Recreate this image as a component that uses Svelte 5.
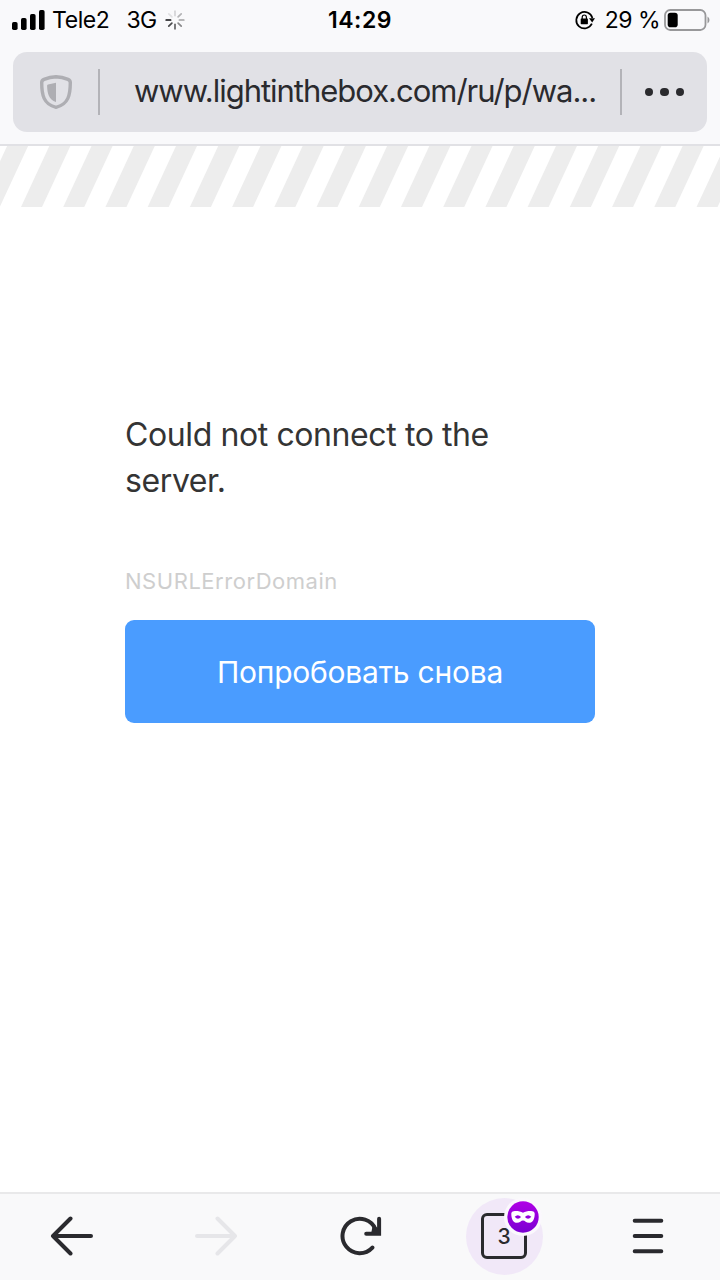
<script lang="ts">
  const url: string = 'www.lightinthebox.com/ru/p/wa...';
  const tabCount: number = 3;

  const signalBars = [
    { x: 0, height: 8 },
    { x: 9, height: 12 },
    { x: 18, height: 16 },
    { x: 27, height: 20 },
  ];

  // spinner spokes, clockwise from the top
  const spokes = ['#d4d4d6', '#b4b4b6', '#a0a0a2', '#88888a', '#626264', '#4a4a4c', '#0a0a0c', '#e0e0e2'];

  const stripes: number[] = Array.from({ length: 18 }, (_, i) => i * 42.22 - 21.2);
</script>

<div class="screen">
  <header>
    <div class="status">
      <div class="status-left">
        <svg class="signal" width="33" height="20" viewBox="0 0 33 20">
          {#each signalBars as bar}
            <rect x={bar.x} y={20 - bar.height} width="5.6" height={bar.height} rx="1.7" />
          {/each}
        </svg>
        <span class="carrier">Tele2</span>
        <span class="network">3G</span>
        <svg class="spinner" width="20" height="20" viewBox="-10 -10 20 20">
          {#each spokes as shade, i}
            <line y1="-4.4" y2="-8.8" stroke={shade} transform="rotate({i * 45})" />
          {/each}
        </svg>
      </div>
      <span class="time">14:29</span>
      <div class="status-right">
        <svg class="lock" width="20" height="20" viewBox="0 0 20 20">
          <path d="M16.9 13.7A8.2 8.2 0 1 1 17.4 8" fill="none" stroke="#000" stroke-width="1.7" />
          <path d="M14 8.2h6l-2.8 4.4z" />
          <rect x="5.7" y="8.5" width="7.2" height="5.7" rx=".6" />
          <path d="M7.2 9V7.3a2.1 2.3 0 0 1 4.2 0V9" fill="none" stroke="#000" stroke-width="1.2" />
        </svg>
        <span class="percent">29 %</span>
        <svg class="battery" width="46" height="22" viewBox="0 0 46 22">
          <rect x="1" y="1" width="40.5" height="20" rx="5.2" fill="none" stroke="#98989a" stroke-width="1.8" />
          <rect x="3.7" y="3.8" width="10" height="14.4" rx="2.8" />
          <path d="M43.5 7.5q2 1.2 2 3.5t-2 3.5z" fill="#98989a" />
        </svg>
      </div>
    </div>

    <div class="url-bar">
      <button class="shield" aria-label="Tracking protection">
        <svg width="32" height="34" viewBox="0 0 32 34">
          <path d="M16 1.7C11.5 1.9 7.4 3 4 4.4q-2.4 1-2.3 3.4C1.7 19.6 3.5 29.4 16 32.3 28.5 29.4 30.3 19.6 30.3 7.8q.1-2.4-2.3-3.4C24.6 3 20.5 1.9 16 1.7z" fill="none" stroke="#aeaeb3" stroke-width="3.4" />
          <path d="M16 7.8L8 9.5q-1 .2-.9 1.2C7.3 18 8.6 24.6 16 27z" fill="#aeaeb3" />
        </svg>
      </button>
      <span class="url">{url}</span>
      <button class="more" aria-label="Page actions">
        <i></i><i></i><i></i>
      </button>
    </div>
  </header>

  <main>
    <svg class="stripes" width="720" height="61" viewBox="0 0 720 61">
      {#each stripes as x}
        <path d="M{x + 28.3} 0h21L{x + 21} 61h-21z" fill="#ededed" />
      {/each}
    </svg>
    <div class="error">
      <h1>Could not connect to the server.</h1>
      <p>NSURLErrorDomain</p>
      <button class="retry"><span>Попробовать снова</span></button>
    </div>
  </main>

  <nav>
    <button aria-label="Back">
      <svg width="44" height="40" viewBox="0 0 44 40">
        <path d="M41 20H3M20.5 2.5L3 20l17.5 17.5" />
      </svg>
    </button>
    <button class="disabled" aria-label="Forward">
      <svg width="44" height="40" viewBox="0 0 44 40">
        <path d="M3 20h38M23.5 2.5L41 20 23.5 37.5" />
      </svg>
    </button>
    <button aria-label="Reload">
      <svg width="44" height="40" viewBox="0 0 44 40">
        <path d="M34.4 31.6A17.2 17.2 0 1 1 37.6 13.4" />
        <path d="M41.1 2.8V17.8H28.2" stroke-linejoin="miter" />
        <path d="M34.5 10.5L41 12v6h-8z" class="tip" />
      </svg>
    </button>
    <button aria-label="Tabs">
      <span class="tabs">
        <span class="count">{tabCount}</span>
        <svg class="badge" width="38" height="38" viewBox="0 0 38 38">
          <defs>
            <linearGradient id="mask" x1="0" y1="0" x2="0" y2="1">
              <stop offset="0" stop-color="#b000e6" />
              <stop offset="1" stop-color="#7a00d2" />
            </linearGradient>
          </defs>
          <circle cx="19" cy="19" r="19" fill="#fbf8fd" />
          <circle cx="19" cy="19" r="15.7" fill="url(#mask)" />
          <path
            d="M19 14.8c2.5-1.4 6-2 9.2-1.6 1.9.2 2.6 1.2 2.5 3-.2 5.3-2 8.6-5.7 8.6-2.9 0-4-2.4-6-2.4s-3.1 2.4-6 2.4c-3.7 0-5.5-3.3-5.7-8.6-.1-1.8.6-2.8 2.5-3 3.2-.4 6.7.2 9.2 1.6z"
            fill="#fff"
          />
          <path d="M10.7 18.8q3.2-3.4 6.4.2-3.2 3.4-6.4-.2zM27.3 18.8q-3.2-3.4-6.4.2 3.2 3.4 6.4-.2z" fill="#9200dc" />
        </svg>
      </span>
    </button>
    <button aria-label="Menu">
      <svg width="32" height="36" viewBox="0 0 32 36">
        <path d="M2.7 2.7h26.6M2.7 18h26.6M2.7 33.3h26.6" />
      </svg>
    </button>
  </nav>
</div>

<style>
  :global(body) {
    margin: 0;
  }

  .screen {
    display: flex;
    flex-direction: column;
    width: 720px;
    height: 1280px;
    background: #fff;
    font-family: Inter, 'Liberation Sans', sans-serif;
    overflow: hidden;
  }

  button {
    display: flex;
    align-items: center;
    justify-content: center;
    padding: 0;
    border: none;
    background: none;
    font-family: inherit;
  }

  header {
    box-sizing: border-box;
    height: 146px;
    background: #f9f9fb;
    border-bottom: 2px solid #e1e1e5;
  }

  .status {
    display: grid;
    grid-template-columns: 1fr auto 1fr;
    height: 52px;
    padding: 0 10px 0 12px;
    font-size: 23px;
    line-height: 40px;
    color: #000;
    white-space: nowrap;
  }

  .status-left,
  .status-right {
    display: flex;
    align-items: center;
    height: 39px;
  }

  .status-right {
    justify-content: flex-end;
  }

  .carrier {
    margin-left: 7px;
    letter-spacing: -0.4px;
  }

  .network {
    margin-left: 17px;
    letter-spacing: -0.6px;
  }

  .spinner {
    margin-left: 8px;
    stroke-width: 1.7;
    stroke-linecap: round;
  }

  .time {
    margin-right: 2px;
    font-weight: 600;
    letter-spacing: 0.5px;
  }

  .percent {
    margin-left: 10px;
    letter-spacing: -0.5px;
  }

  .battery {
    margin-left: 4px;
  }

  .url-bar {
    display: flex;
    align-items: center;
    height: 80px;
    margin: 0 13px;
    background: #e1e1e6;
    border-radius: 14px;
  }

  .shield,
  .more {
    flex: none;
    box-sizing: border-box;
    width: 87px;
    height: 46px;
  }

  .shield {
    border-right: 2px solid #b3b3b8;
  }

  .url {
    flex: 1;
    padding: 0 0 3px 34px;
    font-size: 31px;
    letter-spacing: -1.02px;
    line-height: 44px;
    color: #2a2a2e;
    white-space: nowrap;
  }

  .more {
    gap: 7px;
    border-left: 2px solid #b3b3b8;
  }

  .more i {
    width: 8.4px;
    height: 8.4px;
    border-radius: 50%;
    background: #2a2a2e;
  }

  main {
    flex: 1;
  }

  .stripes {
    display: block;
  }

  .error {
    width: 470px;
    margin: 205px auto 0;
  }

  h1 {
    margin: 0;
    font-size: 32px;
    font-weight: 400;
    letter-spacing: -0.4px;
    line-height: 46px;
    color: #343434;
  }

  p {
    margin: 62px 0 23px;
    font-size: 22px;
    letter-spacing: 0.54px;
    line-height: 31px;
    color: #cecece;
  }

  .retry {
    width: 470px;
    height: 103px;
    border-radius: 9px;
    background: #4a9cff;
    color: #fff;
    font-size: 30px;
    letter-spacing: -0.24px;
  }

  nav {
    display: grid;
    grid-template-columns: repeat(5, 1fr);
    box-sizing: border-box;
    height: 88px;
    padding-bottom: 2px;
    background: #f9f9fa;
    border-top: 2px solid #e9e9ea;
  }

  nav svg {
    fill: none;
    stroke: #2a2a2e;
    stroke-width: 4;
    stroke-linecap: round;
    stroke-linejoin: round;
  }

  nav .disabled svg {
    stroke: #e6e6e9;
  }

  nav .tip {
    fill: #2a2a2e;
    stroke: none;
  }

  .tabs {
    position: relative;
    display: flex;
    align-items: center;
    justify-content: center;
    width: 77px;
    height: 77px;
    border-radius: 50%;
    background: #f1e8f8;
  }

  .count {
    box-sizing: border-box;
    width: 46px;
    height: 46px;
    border: 3px solid #2a2a2e;
    border-radius: 6px;
    font-size: 21px;
    font-weight: 500;
    line-height: 41px;
    color: #2a2a2e;
  }

  .tabs .badge {
    position: absolute;
    top: 0;
    left: 38px;
    stroke: none;
  }
</style>
